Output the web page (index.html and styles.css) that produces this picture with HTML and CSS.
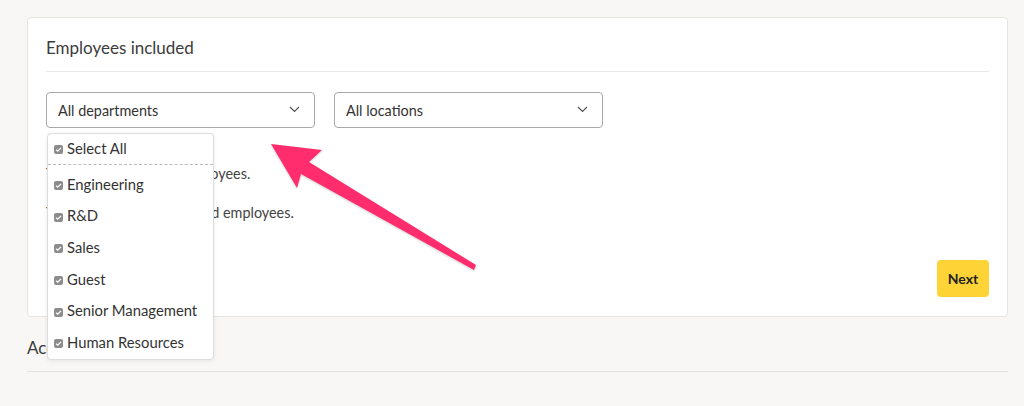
FILE: index.html
```html
<!DOCTYPE html>
<html lang="en">
<head>
    <meta charset="UTF-8">
    <title>Employees included</title>
    <link rel="stylesheet" href="styles.css">
</head>
<body>
    <div class="page">
        <div class="card">
            <h2 class="card-title">Employees included</h2>

            <div class="filters">
                <div class="select">
                    <span>All departments</span>
                    <svg class="chevron" width="11" height="7" viewBox="0 0 11 7"><path d="M1 1l4.5 4.5L10 1" fill="none" stroke="#555" stroke-width="1.2"/></svg>
                </div>
                <div class="select">
                    <span>All locations</span>
                    <svg class="chevron" width="11" height="7" viewBox="0 0 11 7"><path d="M1 1l4.5 4.5L10 1" fill="none" stroke="#555" stroke-width="1.2"/></svg>
                </div>

                <!-- open menu of the departments select -->
                <ul class="menu">
                    <li class="menu-all"><span class="check"></span>Select All</li>
                    <li><span class="check"></span>Engineering</li>
                    <li><span class="check"></span>R&amp;D</li>
                    <li><span class="check"></span>Sales</li>
                    <li><span class="check"></span>Guest</li>
                    <li><span class="check"></span>Senior Management</li>
                    <li><span class="check"></span>Human Resources</li>
                </ul>
            </div>

            <p class="summary first">This plan covers 164 employees.</p>
            <p class="summary">There are 64 of 64 selected employees.</p>

            <div class="actions">
                <button class="next">Next</button>
            </div>
        </div>

        <h2 class="section-title">Access</h2>
    </div>

    <svg class="arrow" width="1024" height="406" viewBox="0 0 1024 406">
        <polygon points="271,144 322,150 309,162 476,265 474,270 301,174 297,188" fill="#ff2d6d"/>
    </svg>
</body>
</html>
```

FILE: styles.css
```css
body {
    margin: 0;
    background-color: #f8f7f5;
    font-family: Lato, "Noto Sans", Arial, sans-serif;
    color: #333;
}
.page {
    padding: 17px 16px 0 27px;
}
.card {
    background: white;
    border: 1px solid #e6e4e0;
    border-radius: 4px;
    padding: 20px 18px 19px 18px;
}
.card-title {
    margin: 0;
    padding-bottom: 13px;
    border-bottom: 1px solid #e8e8e8;
    font-size: 17px;
    line-height: 20px;
    font-weight: 400;
    color: #3c3c3c;
}
.filters {
    position: relative;
    display: flex;
    gap: 19px;
    margin-top: 20px;
}
.select {
    box-sizing: border-box;
    width: 269px;
    height: 36px;
    border: 1px solid #a9a9a9;
    border-radius: 4px;
    display: flex;
    align-items: center;
    justify-content: space-between;
    padding: 0 14px 0 11px;
    font-size: 14.4px;
    color: #333;
}
.chevron {
    margin-top: -2px;
}
.menu {
    position: absolute;
    top: 41px;
    left: 1px;
    width: 167px;
    box-sizing: border-box;
    margin: 0;
    padding: 0 0 1px;
    list-style: none;
    background: white;
    border: 1px solid #ddd;
    border-radius: 4px;
    box-shadow: 0 1px 4px rgba(0, 0, 0, 0.08);
    z-index: 2;
}
.menu li {
    height: 31.6px;
    display: flex;
    align-items: center;
    padding-left: 6px;
    font-size: 14.8px;
    color: #333;
}
.menu .menu-all {
    box-sizing: border-box;
    height: 31px;
    padding-bottom: 3px;
    border-bottom: 1px dashed #bbb;
    margin-bottom: 3px;
}
.check {
    width: 9px;
    height: 9px;
    margin: 4px 4px 0 0;
    border-radius: 2px;
    background: #8c8c8c url("data:image/svg+xml,%3Csvg xmlns='http://www.w3.org/2000/svg' viewBox='0 0 9 9'%3E%3Cpath d='M2 4.6l1.7 1.6L7 2.8' fill='none' stroke='white' stroke-width='1.2'/%3E%3C/svg%3E") no-repeat center;
}
.summary {
    margin: 0;
    font-size: 14.4px;
    line-height: 20px;
    color: #444;
}
.summary.first {
    margin-top: 36px;
    margin-bottom: 19px;
}
.actions {
    display: flex;
    justify-content: flex-end;
    margin-top: 37px;
}
.next {
    width: 52px;
    height: 37px;
    border: none;
    border-radius: 4px;
    background-color: #fdd335;
    font-family: inherit;
    font-size: 14px;
    font-weight: 700;
    color: #222;
}
.section-title {
    margin: 21px 0 0;
    padding-bottom: 13px;
    border-bottom: 1px solid #e4e2de;
    font-size: 17px;
    line-height: 20px;
    font-weight: 400;
    color: #3c3c3c;
}
.arrow {
    position: absolute;
    top: 0;
    left: 0;
    z-index: 3;
    filter: drop-shadow(0 1px 1px rgba(0, 0, 0, 0.2));
}
```
